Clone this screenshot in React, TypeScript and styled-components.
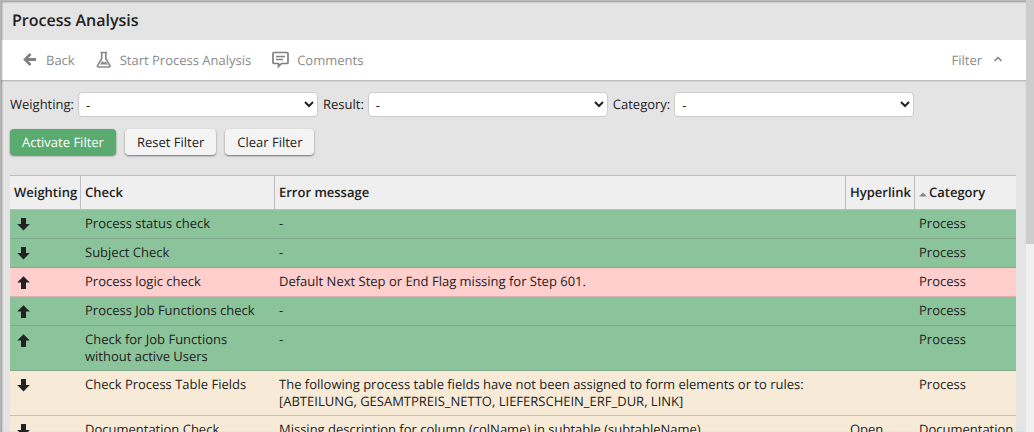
import React from "react";
import styled, { createGlobalStyle } from "styled-components";

const GlobalStyle = createGlobalStyle`
  * { box-sizing: border-box; }
  body {
    margin: 0;
    background: #e4e4e4;
    color: #222;
    font: 13px/17px "Open Sans", "Noto Sans", sans-serif;
    text-rendering: geometricPrecision;
  }
  button, select { font: inherit; color: inherit; text-rendering: inherit; }
`;

const Shell = styled.div`
  display: flex;
  height: 100vh;
  overflow: hidden;
`;

const Frame = styled.main`
  position: relative;
  flex: 1;
  min-width: 0;
  overflow: hidden;

  &::after {
    content: "";
    position: absolute;
    inset: 0;
    pointer-events: none;
    border-top: 1px solid #bababa;
    border-left: 1px solid #b4b4b4;
    box-shadow: inset 1px 1px 2px rgba(0, 0, 0, 0.35);
  }
`;

const ScrollTrack = styled.div`
  flex: 0 0 8px;
  background: #f0f0f0;
`;

const ScrollThumb = styled.div`
  height: 244px;
  background: #cdcdcd;
`;

const Title = styled.h1`
  margin: 0;
  padding: 8px 12px;
  font-size: 16px;
  line-height: 24px;
  font-weight: 600;
`;

const Toolbar = styled.nav`
  display: flex;
  align-items: center;
  gap: 21px;
  height: 41px;
  padding: 0 20px 0 22px;
  background: #fff;
  border-bottom: 1px solid #bdbdbd;
  box-shadow: 0 1px 1px rgba(0, 0, 0, 0.06);
`;

const ToolButton = styled.button<{ $end?: boolean }>`
  display: flex;
  align-items: center;
  gap: 8px;
  margin: 0 0 0 ${(p) => (p.$end ? "auto" : "0")};
  padding: 0;
  border: 0;
  background: none;
  color: #8a8a8a;

  svg { display: block; }
`;

const Filters = styled.form`
  padding: 11px 10px 0;
`;

const Fields = styled.div`
  display: flex;
  align-items: center;
  gap: 5px;
`;

const Field = styled.label`
  display: flex;
  align-items: center;
  gap: 4px;
`;

const Select = styled.select`
  width: 240px;
  height: 25px;
  padding: 0 3px;
  border: 1px solid #ccc;
  border-radius: 4px;
  background: #fff;
`;

const Actions = styled.div`
  display: flex;
  gap: 9px;
  margin-top: 12px;
`;

const Button = styled.button<{ $primary?: boolean }>`
  height: 26px;
  padding: 0 12px;
  border: 0;
  border-radius: 4px;
  background: ${(p) => (p.$primary ? "#5aab70" : "#f4f4f4")};
  color: ${(p) => (p.$primary ? "#fff" : "#222")};
  box-shadow: 0 1px 2px rgba(0, 0, 0, 0.5);
`;

const TableArea = styled.section`
  padding: 20px 10px 0;
`;

const Table = styled.table`
  width: 100%;
  table-layout: fixed;
  border-collapse: separate;
  border-spacing: 0;
`;

const Col = styled.col<{ $width?: number }>`
  width: ${(p) => (p.$width ? `${p.$width}px` : "auto")};
`;

const HeadCell = styled.th`
  height: 35px;
  padding: 0 4px;
  background: #efefef;
  border: solid #bdbdbd;
  border-width: 1px 1px 1px 0;
  font-weight: 600;
  text-align: left;
  white-space: nowrap;

  &:last-child { border-right: 0; }
`;

const SortMark = styled.svg`
  margin-right: 2px;
`;

type Tone = "ok" | "error" | "warn";
const fills: Record<Tone, string> = { ok: "#8bc49a", error: "#ffcfce", warn: "#f7ebd8" };
const lines: Record<Tone, string> = { ok: "#7fa98a", error: "#d9b0b0", warn: "#c9c0b3" };

const Row = styled.tr<{ $tone: Tone }>`
  background: ${(p) => fills[p.$tone]};

  td { border-bottom: 1px solid ${(p) => lines[p.$tone]}; }
`;

const Cell = styled.td`
  padding: 5px 4px;
  vertical-align: top;
  white-space: pre-line;

  svg { display: block; margin-left: 3px; }
`;

const WeightIcon = ({ up }: { up?: boolean }) => (
  <svg width="13" height="18" viewBox="0 0 13 18" role="img" aria-label={up ? "High" : "Low"}>
    <path
      fill="#222"
      d={up ? "M6.5 3.2L12.800 9.500H9v6.500H4V9.500H.2z" : "M4 3h5v6h3.800L6.500 15.500.2 9H4z"}
    />
  </svg>
);

interface Check {
  up?: boolean;
  tone: Tone;
  name: string;
  message: string;
  link?: string;
  category: string;
}

const checks: Check[] = [
  { tone: "ok", name: "Process status check", message: "-", category: "Process" },
  { tone: "ok", name: "Subject Check", message: "-", category: "Process" },
  { up: true, tone: "error", name: "Process logic check", message: "Default Next Step or End Flag missing for Step 601.", category: "Process" },
  { up: true, tone: "ok", name: "Process Job Functions check", message: "-", category: "Process" },
  { up: true, tone: "ok", name: "Check for Job Functions without active Users", message: "-", category: "Process" },
  {
    tone: "warn",
    name: "Check Process Table Fields",
    message:
      "The following process table fields have not been assigned to form elements or to rules:\n[ABTEILUNG, GESAMTPREIS_NETTO, LIEFERSCHEIN_ERF_DUR, LINK]",
    category: "Process",
  },
  { tone: "warn", name: "Documentation Check", message: "Missing description for column (colName) in subtable (subtableName)", link: "Open", category: "Documentation" },
];

const Link = styled.a`
  color: inherit;
  text-decoration: none;
`;

export default function App() {
  return (
    <Shell>
      <GlobalStyle />
      <Frame>
        <Title>Process Analysis</Title>
        <Toolbar>
          <ToolButton type="button">
            <svg width="16" height="16" viewBox="0 0 16 16" fill="none" stroke="#808080">
              <path d="M14 7.5H3.5" strokeWidth="3" />
              <path d="M8.5 2L3 7.5 8.5 13" strokeWidth="2.6" />
            </svg>
            Back
          </ToolButton>
          <ToolButton type="button">
            <svg width="16" height="18" viewBox="0 0 16 18" fill="none" stroke="#8a8a8a" strokeWidth="1.7">
              <path d="M4.5 1.500h6.500M5.700 2v5.500L1.600 14.500q-.6 1.500.9 1.500h10.500q1.500 0 .9-1.500L9.800 7.500V2" />
              <path d="M4 13.500l2.400-3.500 1.600 1.500 1.500-1 2.500 3z" fill="#8a8a8a" stroke="none" />
            </svg>
            Start Process Analysis
          </ToolButton>
          <ToolButton type="button">
            <svg width="17" height="18" viewBox="0 0 17 18" fill="none" stroke="#808080" strokeWidth="1.700">
              <path d="M2 1.500h13q1 0 1 1v9q0 1-1 1H9.500l-3 3v-3H2q-1 0-1-1v-9q0-1 1-1z" />
              <path d="M4 5.500h9M4 8.500h7" strokeWidth="1.300" />
            </svg>
            Comments
          </ToolButton>
          <ToolButton type="button" $end aria-expanded="true">
            Filter
            <svg width="16" height="16" viewBox="0 0 16 16" fill="none" stroke="#808080" strokeWidth="1.500">
              <path d="M4.500 9L8 5.500 11.500 9" />
            </svg>
          </ToolButton>
        </Toolbar>
        <Filters>
          <Fields>
            {["Weighting:", "Result:", "Category:"].map((label) => (
              <Field key={label}>
                {label}
                <Select>
                  <option>-</option>
                </Select>
              </Field>
            ))}
          </Fields>
          <Actions>
            <Button type="button" $primary>Activate Filter</Button>
            <Button type="button">Reset Filter</Button>
            <Button type="button">Clear Filter</Button>
          </Actions>
        </Filters>
        <TableArea>
          <Table>
            <colgroup>
              <Col $width={71} />
              <Col $width={194} />
              <Col />
              <Col $width={69} />
              <Col $width={101} />
            </colgroup>
            <thead>
              <tr>
                <HeadCell>Weighting</HeadCell>
                <HeadCell>Check</HeadCell>
                <HeadCell>Error message</HeadCell>
                <HeadCell>Hyperlink</HeadCell>
                <HeadCell aria-sort="ascending">
                  <SortMark width="8" height="5" viewBox="0 0 8 5" aria-hidden="true">
                    <path d="M0 4.500L4 .5l4 4z" fill="#8a8a8a" />
                  </SortMark>
                  Category
                </HeadCell>
              </tr>
            </thead>
            <tbody>
              {checks.map((c) => (
                <Row key={c.name} $tone={c.tone}>
                  <Cell><WeightIcon up={c.up} /></Cell>
                  <Cell>{c.name}</Cell>
                  <Cell>{c.message}</Cell>
                  <Cell>{c.link && <Link href="#documentation">{c.link}</Link>}</Cell>
                  <Cell>{c.category}</Cell>
                </Row>
              ))}
            </tbody>
          </Table>
        </TableArea>
      </Frame>
      <ScrollTrack>
        <ScrollThumb />
      </ScrollTrack>
    </Shell>
  );
}
